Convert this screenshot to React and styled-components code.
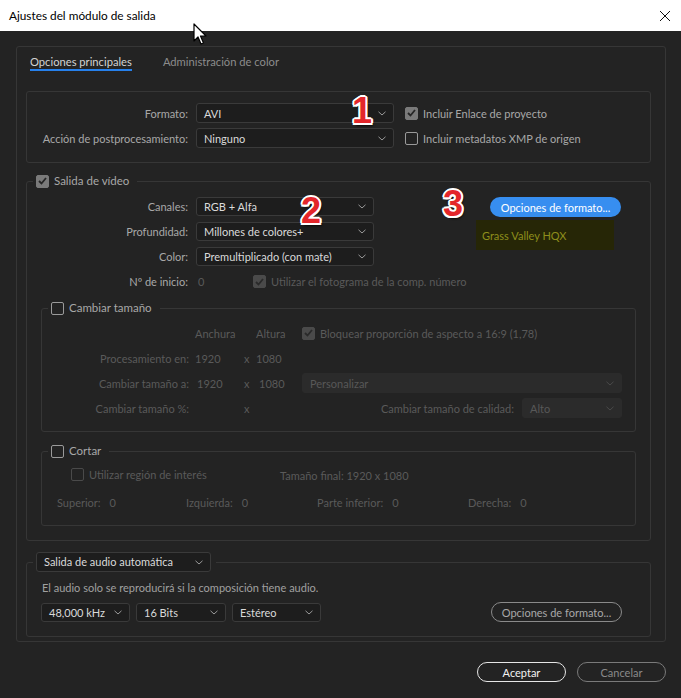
import React from 'react';
import styled, { createGlobalStyle } from 'styled-components';

const GlobalStyle = createGlobalStyle`
  html, body {
    margin: 0;
    padding: 0;
    background: #232323;
  }
  * {
    box-sizing: border-box;
  }
`;

const Window = styled.div`
  position: relative;
  width: 681px;
  height: 698px;
  background: #232323;
  font-family: Lato, "Liberation Sans", sans-serif;
  font-size: 11px;
  color: #a8a8a8;
  overflow: hidden;
`;

const TitleBar = styled.div`
  height: 31px;
  background: #ffffff;
  display: flex;
  align-items: center;
  justify-content: space-between;
  padding: 0 10px 0 9px;
`;

const TitleText = styled.span`
  font-size: 11.8px;
  color: #000;
`;

const CloseButton = styled.span`
  display: flex;
  width: 12px;
  height: 12px;
`;

const Body = styled.div`
  padding: 15px 15px 0 16px;
`;

const Panel = styled.div`
  border: 1px solid #363636;
  border-radius: 3px;
  padding: 0 14px 4px 9px;
`;

const Tabs = styled.div`
  display: flex;
  gap: 31px;
  padding: 7px 0 0 4px;
`;

const Tab = styled.div`
  font-size: 11.2px;
  line-height: 15px;
  color: ${({ $active }) => ($active ? '#d2d2d2' : '#8c8c8c')};
  border-bottom: 2px solid ${({ $active }) => ($active ? '#2680eb' : 'transparent')};
`;

const TopBox = styled.div`
  margin-top: 20px;
  border: 1px solid #363636;
  border-radius: 3px;
  padding: 11px 0 14px;
  display: grid;
  grid-template-columns: 161px 198px auto;
  grid-auto-rows: 20px;
  column-gap: 8px;
  row-gap: 5px;
  align-items: center;
`;

const Label = styled.span`
  text-align: right;
  white-space: nowrap;
  color: ${({ $disabled }) => ($disabled ? '#5a5a5a' : '#a8a8a8')};
`;

const SelectBox = styled.div`
  display: flex;
  align-items: center;
  justify-content: space-between;
  width: ${({ $width }) => ($width ? `${$width}px` : '100%')};
  height: ${({ $height }) => $height || 19}px;
  padding: 0 7px 0 7px;
  border-radius: 3px;
  background: ${({ $disabled }) => ($disabled ? '#2b2b2b' : '#1d1d1d')};
  border: 1px solid ${({ $disabled }) => ($disabled ? '#2b2b2b' : '#3a3a3a')};
  color: ${({ $disabled }) => ($disabled ? '#585858' : '#dadada')};
  font-size: 11px;
  white-space: nowrap;
`;

const Chevron = ({ color }) => (
  <svg width="8" height="5" viewBox="0 0 8 5">
    <path d="M0.5 0.8 L4 4 L7.5 0.8" fill="none" stroke={color} strokeWidth="1" />
  </svg>
);

const Select = ({ value, width, disabled, height }) => (
  <SelectBox $width={width} $disabled={disabled} $height={height}>
    <span>{value}</span>
    <Chevron color={disabled ? '#4a4a4a' : '#9a9a9a'} />
  </SelectBox>
);

const Box = styled.span`
  flex: none;
  display: inline-flex;
  align-items: center;
  justify-content: center;
  width: 13px;
  height: 13px;
  border-radius: 2px;
  border: 1.5px solid ${({ $disabled, $checked }) =>
    $checked ? ($disabled ? '#4a4a4a' : '#7a7a7a') : $disabled ? '#4a4a4a' : '#9a9a9a'};
  background: ${({ $disabled, $checked }) =>
    $checked ? ($disabled ? '#4a4a4a' : '#7a7a7a') : 'transparent'};
`;

const CheckRow = styled.span`
  flex: none;
  display: inline-flex;
  align-items: center;
  gap: ${({ $gap }) => $gap || 5}px;
  white-space: nowrap;
  margin-left: ${({ $offset }) => $offset || 0}px;
  color: ${({ $disabled }) => ($disabled ? '#5a5a5a' : '#a8a8a8')};
  font-size: ${({ $size }) => $size || 11}px;
`;

const Checkbox = ({ checked, disabled, label, offset, gap, size }) => (
  <CheckRow $disabled={disabled} $offset={offset} $gap={gap} $size={size}>
    <Box $checked={checked} $disabled={disabled}>
      {checked && (
        <svg width="9" height="8" viewBox="0 0 9 8">
          <path d="M1 4 L3.5 6.5 L8 1" fill="none" stroke={disabled ? '#2a2a2a' : '#262626'} strokeWidth="1.8" />
        </svg>
      )}
    </Box>
    {label}
  </CheckRow>
);

const Group = styled.fieldset`
  margin: ${({ $margin }) => $margin || '0'};
  padding: 0;
  min-width: 0;
  border: 1px solid #363636;
  border-radius: 3px;
`;

const Legend = styled.legend`
  margin-left: 6px;
  padding: 0 ${({ $padRight }) => $padRight || 8}px 0 3px;
  line-height: 14px;
  height: ${({ $height }) => $height || 14}px;
  display: flex;
  align-items: center;
`;

const VideoTop = styled.div`
  display: flex;
  align-items: flex-start;
  padding-top: 9px;
`;

const FormGrid = styled.div`
  display: grid;
  grid-template-columns: 161px 178px;
  grid-auto-rows: 19px;
  column-gap: 8px;
  row-gap: 6px;
  align-items: center;
`;

const InlineCell = styled.div`
  display: flex;
  align-items: center;
  white-space: nowrap;
`;

const StartValue = styled.span`
  flex: none;
  width: 57px;
  padding-left: 2px;
  color: #5a5a5a;
`;

const SideColumn = styled.div`
  margin-left: 102px;
  display: flex;
  flex-direction: column;
`;

const BlueButton = styled.div`
  margin-left: 14px;
  width: 131px;
  height: 20px;
  border-radius: 10px;
  background: #378ef0;
  color: #fff;
  display: flex;
  align-items: center;
  justify-content: center;
  font-size: 11px;
`;

const CodecBox = styled.div`
  margin-top: 3px;
  width: 138px;
  height: 30px;
  background: #262606;
  color: #8e8e1c;
  padding-left: 6px;
  display: flex;
  align-items: center;
  font-size: 11px;
`;

const SizeGrid = styled.div`
  display: grid;
  grid-template-columns: 147px 55px 12px 46px 320px;
  grid-auto-rows: 20px;
  row-gap: 5px;
  align-items: center;
  padding: 8px 13px 13px 0;
  color: #5a5a5a;
`;

const Cell = styled.span`
  padding-left: ${({ $pad }) => $pad || 0}px;
  white-space: nowrap;
  text-align: ${({ $right }) => ($right ? 'right' : 'left')};
`;

const QualityCell = styled.div`
  display: flex;
  align-items: center;
  justify-content: flex-end;
  gap: 8px;
  white-space: nowrap;
`;

const CropBody = styled.div`
  padding: 10px 0 16px 15px;
  color: #5a5a5a;
`;

const CropTop = styled.div`
  display: flex;
  align-items: center;
  height: 14px;
  padding-left: 14px;
`;

const CropTopFirst = styled.div`
  width: 209px;
`;

const CropEdges = styled.div`
  margin-top: 13px;
  display: grid;
  grid-template-columns: 129px 131px 151px auto;
  height: 14px;
  align-items: center;
`;

const EdgeItem = styled.span`
  display: flex;
  gap: 9px;
  white-space: nowrap;
`;

const VideoBody = styled.div`
  padding: 0 14px 14px 0;
`;

const AudioBody = styled.div`
  padding: 9px 28px 14px 14px;
`;

const AudioNote = styled.div`
  padding-left: 1px;
  line-height: 14px;
  color: #a0a0a0;
`;

const AudioRow = styled.div`
  margin-top: 7px;
  display: flex;
  align-items: center;
  gap: 6px;
`;

const PillButton = styled.div`
  margin-left: ${({ $auto }) => ($auto ? 'auto' : '0')};
  width: ${({ $width }) => $width}px;
  height: 20px;
  border-radius: 10px;
  border: 1.5px solid ${({ $border }) => $border};
  color: ${({ $color }) => $color};
  display: flex;
  align-items: center;
  justify-content: center;
  font-size: 11px;
`;

const Footer = styled.div`
  margin-top: 20px;
  display: flex;
  justify-content: flex-end;
  gap: 11px;
`;

const Marker = styled.span`
  position: absolute;
  left: ${({ $x }) => $x}px;
  top: ${({ $y }) => $y}px;
  font-family: "Liberation Sans", Arial, sans-serif;
  font-weight: 700;
  font-size: 36px;
  line-height: 36px;
  color: #e3262b;
  text-shadow:
    -1.5px -1.5px 0 #fff, 1.5px -1.5px 0 #fff, -1.5px 1.5px 0 #fff, 1.5px 1.5px 0 #fff,
    0 -2px 0 #fff, 0 2px 0 #fff, -2px 0 0 #fff, 2px 0 0 #fff,
    2px 3px 2px rgba(0, 0, 0, 0.7);
`;

const Cursor = styled.svg`
  position: absolute;
  left: 193px;
  top: 23px;
`;

export default function App() {
  return (
    <Window>
      <GlobalStyle />
      <TitleBar>
        <TitleText>Ajustes del módulo de salida</TitleText>
        <CloseButton>
          <svg width="12" height="12" viewBox="0 0 12 12">
            <path d="M1 1 L11 11 M11 1 L1 11" stroke="#111" strokeWidth="1" />
          </svg>
        </CloseButton>
      </TitleBar>
      <Body>
        <Panel>
          <Tabs>
            <Tab $active>Opciones principales</Tab>
            <Tab>Administración de color</Tab>
          </Tabs>

          <TopBox>
            <Label>Formato:</Label>
            <Select value="AVI" height={20} />
            <Checkbox checked label="Incluir Enlace de proyecto" offset={3} />
            <Label>Acción de postprocesamiento:</Label>
            <Select value="Ninguno" height={20} />
            <Checkbox label="Incluir metadatos XMP de origen" offset={3} />
          </TopBox>

          <Group $margin="11px 0 0 0">
            <Legend>
              <Checkbox checked label="Salida de vídeo" gap={5} size={11.5} />
            </Legend>
            <VideoBody>
              <VideoTop>
                <FormGrid>
                  <Label>Canales:</Label>
                  <Select value="RGB + Alfa" />
                  <Label>Profundidad:</Label>
                  <Select value="Millones de colores+" />
                  <Label>Color:</Label>
                  <Select value="Premultiplicado (con mate)" />
                  <Label>Nº de inicio:</Label>
                  <InlineCell>
                    <StartValue>0</StartValue>
                    <Checkbox checked disabled label="Utilizar el fotograma de la comp. número" />
                  </InlineCell>
                </FormGrid>
                <SideColumn>
                  <BlueButton>Opciones de formato...</BlueButton>
                  <CodecBox>Grass Valley HQX</CodecBox>
                </SideColumn>
              </VideoTop>

              <Group $margin="10px 0 0 14px">
                <Legend>
                  <Checkbox label="Cambiar tamaño" size={11.5} />
                </Legend>
                <SizeGrid>
                  <span />
                  <Cell $pad={6}>Anchura</Cell>
                  <span />
                  <Cell>Altura</Cell>
                  <Checkbox checked disabled label="Bloquear proporción de aspecto a 16:9 (1,78)" />

                  <Cell $right>Procesamiento en:</Cell>
                  <Cell $pad={6}>1920</Cell>
                  <Cell>x</Cell>
                  <Cell>1080</Cell>
                  <span />

                  <Cell $right>Cambiar tamaño a:</Cell>
                  <Cell $pad={8}>1920</Cell>
                  <Cell>x</Cell>
                  <Cell $pad={3}>1080</Cell>
                  <Select value="Personalizar" disabled height={20} />

                  <Cell $right>Cambiar tamaño %:</Cell>
                  <span />
                  <Cell>x</Cell>
                  <span />
                  <QualityCell>
                    Cambiar tamaño de calidad:
                    <Select value="Alto" disabled width={100} height={20} />
                  </QualityCell>
                </SizeGrid>
              </Group>

              <Group $margin="12px 0 0 14px">
                <Legend>
                  <Checkbox label="Cortar" size={11.5} />
                </Legend>
                <CropBody>
                  <CropTop>
                    <CropTopFirst>
                      <Checkbox disabled label="Utilizar región de interés" />
                    </CropTopFirst>
                    <span>Tamaño final: 1920 x 1080</span>
                  </CropTop>
                  <CropEdges>
                    <EdgeItem><span>Superior:</span><span>0</span></EdgeItem>
                    <EdgeItem><span>Izquierda:</span><span>0</span></EdgeItem>
                    <EdgeItem><span>Parte inferior:</span><span>0</span></EdgeItem>
                    <EdgeItem><span>Derecha:</span><span>0</span></EdgeItem>
                  </CropEdges>
                </CropBody>
              </Group>
            </VideoBody>
          </Group>

          <Group $margin="11px 0 0 0">
            <Legend $height={20} $padRight={5}>
              <Select value="Salida de audio automática" width={175} height={20} />
            </Legend>
            <AudioBody>
              <AudioNote>El audio solo se reproducirá si la composición tiene audio.</AudioNote>
              <AudioRow>
                <Select value="48,000 kHz" width={89} />
                <Select value="16 Bits" width={90} />
                <Select value="Estéreo" width={89} />
                <PillButton $auto $width={131} $border="#8a8a8a" $color="#a8a8a8">
                  Opciones de formato...
                </PillButton>
              </AudioRow>
            </AudioBody>
          </Group>
        </Panel>
        <Footer>
          <PillButton $width={89} $border="#e6e6e6" $color="#f2f2f2">Aceptar</PillButton>
          <PillButton $width={89} $border="#7a7a7a" $color="#8a8a8a">Cancelar</PillButton>
        </Footer>
      </Body>

      <Marker $x={352} $y={93}>1</Marker>
      <Marker $x={301} $y={193}>2</Marker>
      <Marker $x={443} $y={186}>3</Marker>

      <Cursor width="14" height="23" viewBox="0 0 14 23">
        <path d="M1 1 L1 18 L5 14 L8 21 L10.5 20 L7.5 13 L13 13 Z" fill="#fff" stroke="#000" strokeWidth="1.2" strokeLinejoin="round" />
      </Cursor>
    </Window>
  );
}
